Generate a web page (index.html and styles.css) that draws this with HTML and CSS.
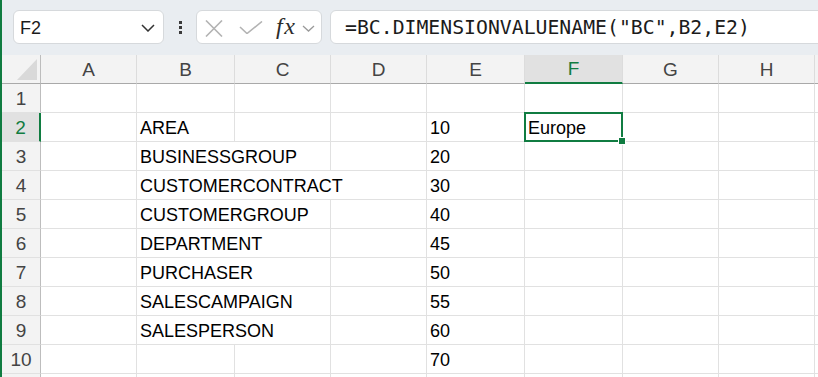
FILE: index.html
```html
<!DOCTYPE html>
<html>
<head>
<meta charset="utf-8">
<link rel="stylesheet" href="styles.css">
</head>
<body>
<div class="app">
  <div class="toolbar">
    <div class="namebox">
      <span class="name">F2</span>
      <svg class="chev" width="14" height="8" viewBox="0 0 14 8"><path d="M1 1 L7 7 L13 1" fill="none" stroke="#333" stroke-width="1.5"/></svg>
    </div>
    <div class="dots"><i></i><i></i><i></i></div>
    <div class="fxbox">
      <svg class="ico-x" width="18" height="17" viewBox="0 0 18 17"><path d="M1 0.5 L17 16.5 M17 0.5 L1 16.5" stroke="#b3b3b3" stroke-width="1.6" fill="none"/></svg>
      <svg class="ico-ok" width="24" height="13" viewBox="0 0 24 13"><path d="M1 6 L8 12.5 L23 0.5" stroke="#b3b3b3" stroke-width="1.6" fill="none"/></svg>
      <span class="fx">fx</span>
      <svg class="chev2" width="13" height="7" viewBox="0 0 13 7"><path d="M1 1 L6.5 6 L12 1" fill="none" stroke="#9a9a9a" stroke-width="1.3"/></svg>
    </div>
    <div class="formula">=BC.DIMENSIONVALUENAME("BC",B2,E2)</div>
  </div>
  <div class="sheet">
    <div class="hd corner"><span class="tri"></span></div>
    <div class="hd col">A</div>
    <div class="hd col">B</div>
    <div class="hd col">C</div>
    <div class="hd col">D</div>
    <div class="hd col">E</div>
    <div class="hd col sel">F</div>
    <div class="hd col">G</div>
    <div class="hd col">H</div>
    <div class="hd col"></div>

    <div class="rh">1</div>
    <div class="c"></div><div class="c"></div><div class="c"></div><div class="c"></div><div class="c"></div><div class="c"></div><div class="c"></div><div class="c"></div><div class="c"></div>

    <div class="rh sel">2</div>
    <div class="c"></div><div class="c">AREA</div><div class="c"></div><div class="c"></div><div class="c">10</div><div class="c active">Europe<span class="handle"></span></div><div class="c"></div><div class="c"></div><div class="c"></div>

    <div class="rh">3</div>
    <div class="c"></div><div class="c s2">BUSINESSGROUP</div><div class="c"></div><div class="c">20</div><div class="c"></div><div class="c"></div><div class="c"></div><div class="c"></div>

    <div class="rh">4</div>
    <div class="c"></div><div class="c s3">CUSTOMERCONTRACT</div><div class="c">30</div><div class="c"></div><div class="c"></div><div class="c"></div><div class="c"></div>

    <div class="rh">5</div>
    <div class="c"></div><div class="c s2">CUSTOMERGROUP</div><div class="c"></div><div class="c">40</div><div class="c"></div><div class="c"></div><div class="c"></div><div class="c"></div>

    <div class="rh">6</div>
    <div class="c"></div><div class="c s2">DEPARTMENT</div><div class="c"></div><div class="c">45</div><div class="c"></div><div class="c"></div><div class="c"></div><div class="c"></div>

    <div class="rh">7</div>
    <div class="c"></div><div class="c s2">PURCHASER</div><div class="c"></div><div class="c">50</div><div class="c"></div><div class="c"></div><div class="c"></div><div class="c"></div>

    <div class="rh">8</div>
    <div class="c"></div><div class="c s2">SALESCAMPAIGN</div><div class="c"></div><div class="c">55</div><div class="c"></div><div class="c"></div><div class="c"></div><div class="c"></div>

    <div class="rh">9</div>
    <div class="c"></div><div class="c s2">SALESPERSON</div><div class="c"></div><div class="c">60</div><div class="c"></div><div class="c"></div><div class="c"></div><div class="c"></div>

    <div class="rh">10</div>
    <div class="c"></div><div class="c"></div><div class="c"></div><div class="c"></div><div class="c">70</div><div class="c"></div><div class="c"></div><div class="c"></div><div class="c"></div>

    <div class="rh"></div>
    <div class="c"></div><div class="c"></div><div class="c"></div><div class="c"></div><div class="c"></div><div class="c"></div><div class="c"></div><div class="c"></div><div class="c"></div>
  </div>
</div>
</body>
</html>
```

FILE: styles.css
```css
html, body {
  margin: 0;
  padding: 0;
  background: #ffffff;
}
body {
  width: 818px;
  height: 377px;
  overflow: hidden;
  font-family: "Liberation Sans", Arial, sans-serif;
}
.app {
  position: relative;
  width: 818px;
  height: 377px;
  overflow: hidden;
}
.app::before {
  content: "";
  position: absolute;
  left: 0;
  top: 0;
  width: 2px;
  height: 377px;
  background: #107c41;
  z-index: 5;
}
.toolbar {
  height: 55px;
  box-sizing: border-box;
  background: #e9edf1;
  display: flex;
  align-items: flex-start;
  padding: 10px 0 0 13px;
}
.namebox {
  width: 151px;
  height: 34px;
  box-sizing: border-box;
  background: #fff;
  border: 1px solid #d6d9dc;
  border-radius: 6px;
  display: flex;
  align-items: center;
  justify-content: space-between;
  padding: 0 8px 0 6px;
}
.name {
  font-size: 18px;
  color: #1b1b1b;
  padding-top: 2px;
}
.chev {
  margin-top: 1px;
}
.dots {
  width: 32px;
  height: 34px;
  display: flex;
  flex-direction: column;
  align-items: center;
  justify-content: center;
  gap: 2px;
}
.dots i {
  display: block;
  width: 3px;
  height: 3px;
  background: #3a3a3a;
}
.fxbox {
  width: 126px;
  height: 34px;
  box-sizing: border-box;
  background: #fff;
  border: 1px solid #d6d9dc;
  border-radius: 6px;
  display: flex;
  align-items: center;
  padding-left: 8px;
}
.ico-x {
  margin-top: 2px;
}
.ico-ok {
  margin-left: 16px;
  margin-top: 0px;
}
.fx {
  font-family: "Liberation Serif", "Times New Roman", serif;
  font-style: italic;
  font-size: 24px;
  color: #2b2b2b;
  margin-left: 13px;
  letter-spacing: 1.5px;
  margin-top: -2px;
}
.chev2 {
  margin-left: 6px;
  margin-top: 2px;
}
.formula {
  margin-left: 8px;
  flex: 1;
  height: 34px;
  box-sizing: border-box;
  margin-right: -10px;
  background: #fff;
  border: 1px solid #d6d9dc;
  border-radius: 6px;
  font-family: "DejaVu Sans Mono", "Liberation Mono", monospace;
  font-size: 19.8px;
  color: #1b1b1b;
  padding-left: 14px;
  line-height: 33px;
  white-space: nowrap;
}
.sheet {
  display: grid;
  grid-template-columns: 41px 96px 98px 96px 96px 98px 98px 96px 96px 10px;
  grid-auto-rows: 29px;
  grid-template-rows: 29px;
}
.hd {
  background: #f3f3f3;
  border-right: 1px solid #dcdcdc;
  border-bottom: 1px solid #a9a9a9;
  box-sizing: border-box;
  font-size: 19px;
  color: #444;
  display: flex;
  align-items: center;
  justify-content: center;
  padding-top: 1px;
}
.hd.corner {
  border-right: 1px solid #bdbdbd;
  position: relative;
}
.tri {
  position: absolute;
  right: 3px;
  bottom: 3px;
  width: 0;
  height: 0;
  border-left: 20px solid transparent;
  border-bottom: 21px solid #d9d9d9;
}
.hd.sel {
  background: #e1e1e1;
  color: #107c41;
  border-bottom: 2px solid #107c41;
}
.rh {
  background: #f3f3f3;
  border-right: 1px solid #bdbdbd;
  border-bottom: 1px solid #e1e1e1;
  box-sizing: border-box;
  font-size: 19px;
  color: #444;
  display: flex;
  align-items: center;
  justify-content: center;
  padding: 1px 0 0 2px;
}
.rh.sel {
  background: #e1e1e1;
  color: #107c41;
  border-right: 2px solid #107c41;
}
.c {
  border-right: 1px solid #e1e1e1;
  border-bottom: 1px solid #e1e1e1;
  box-sizing: border-box;
  font-size: 18px;
  color: #000;
  display: flex;
  align-items: flex-end;
  padding: 0 0 2px 3px;
  line-height: 21px;
  white-space: nowrap;
}
.c.s2 {
  grid-column: span 2;
}
.c.s3 {
  grid-column: span 3;
}
.c.active {
  position: relative;
}
.c.active::after {
  content: "";
  position: absolute;
  left: -1px;
  top: -1px;
  right: -1px;
  bottom: -1px;
  border: 2px solid #107c41;
}
.handle {
  position: absolute;
  right: -3px;
  bottom: -3px;
  width: 6px;
  height: 6px;
  background: #107c41;
  border: 1px solid #fff;
  box-sizing: content-box;
  margin: -1px;
  z-index: 2;
}
```
